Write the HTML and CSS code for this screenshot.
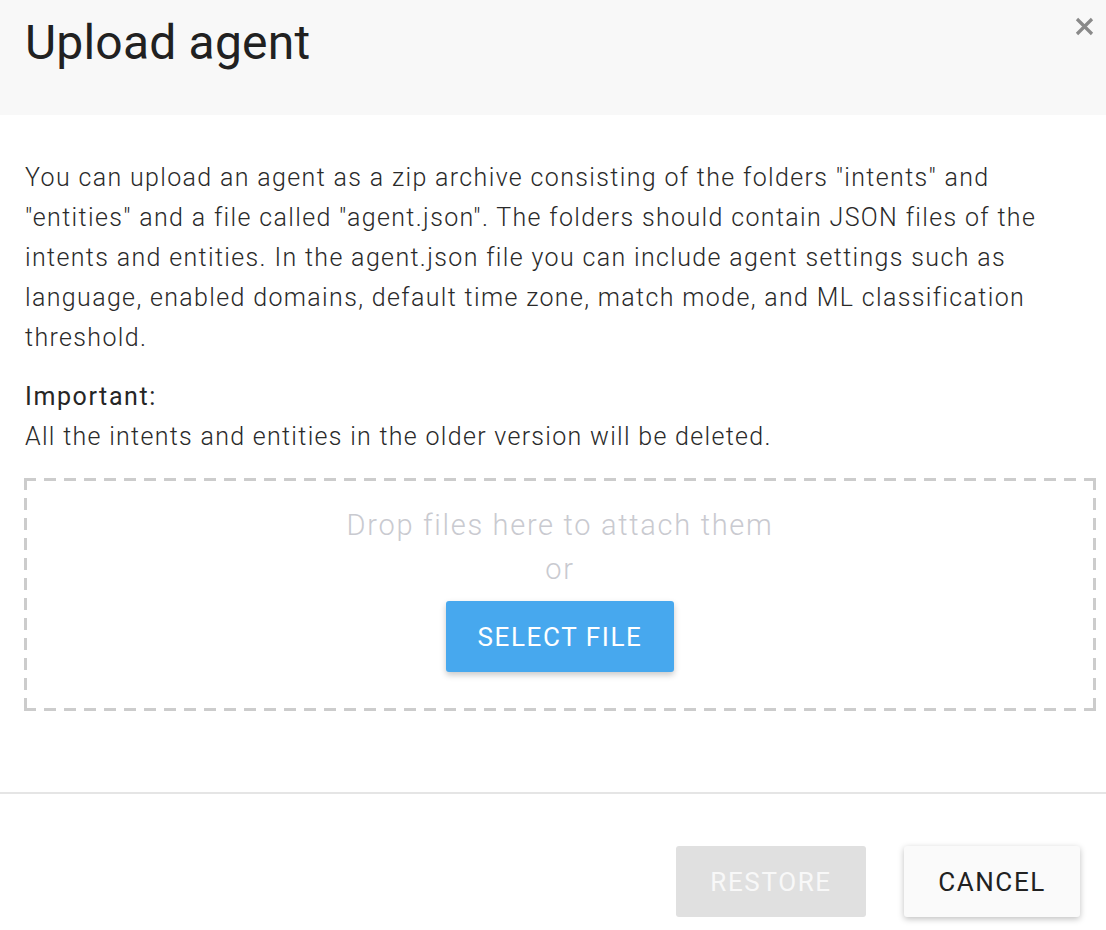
FILE: index.html
```html
<!DOCTYPE html>
<html lang="en">
<head>
<meta charset="utf-8">
<title>Upload agent</title>
<link rel="stylesheet" href="styles.css">
</head>
<body>
<div class="dialog">
  <header class="dialog-header">
    <h1 class="dialog-title">Upload agent</h1>
    <button class="close-btn" aria-label="Close">
      <svg width="19" height="19" viewBox="0 0 19 19"><path d="M2 2 L17 17 M17 2 L2 17" stroke="#8a8a8a" stroke-width="3.2" fill="none"/></svg>
    </button>
  </header>
  <section class="dialog-body">
    <p class="desc">You can upload an agent as a zip archive consisting of the folders "intents" and "entities" and a file called "agent.json". The folders should contain JSON files of the intents and entities. In the agent.json file you can include agent settings such as language, enabled domains, default time zone, match mode, and ML classification threshold.</p>
    <p class="important"><span class="important-label">Important:</span><br>All the intents and entities in the older version will be deleted.</p>
    <div class="dropzone">
      <div class="drop-text">Drop files here to attach them</div>
      <div class="drop-or">or</div>
      <button class="btn btn-primary">SELECT FILE</button>
    </div>
  </section>
  <footer class="dialog-footer">
    <button class="btn btn-disabled">RESTORE</button>
    <button class="btn btn-raised">CANCEL</button>
  </footer>
</div>
</body>
</html>
```

FILE: styles.css
```css
html, body {
  margin: 0;
  padding: 0;
  background: #ffffff;
}
body {
  font-family: Roboto, "Liberation Sans", Arial, sans-serif;
  color: #333333;
}
.dialog {
  width: 1106px;
  min-height: 930px;
  background: #ffffff;
}
.dialog-header {
  height: 115px;
  background: #f8f8f8;
  display: flex;
  justify-content: space-between;
  align-items: flex-start;
  padding: 0 12px 0 25px;
  box-sizing: border-box;
}
.dialog-title {
  margin: 15px 0 0 0;
  font-size: 48px;
  font-weight: 400;
  line-height: 56px;
  letter-spacing: 0.2px;
  color: #212121;
}
.close-btn {
  margin-top: 17px;
  padding: 0;
  border: 0;
  background: transparent;
  width: 19px;
  height: 19px;
  cursor: pointer;
}
.close-btn svg { display: block; }
.dialog-body {
  padding: 43px 10px 0 24px;
}
.desc {
  margin: 0;
  padding: 0 50px 0 1px;
  font-size: 25px;
  line-height: 40px;
  font-weight: 300;
  letter-spacing: 1.35px;
  color: #2a2a2a;
}
.important {
  margin: 19px 0 0 0;
  padding-left: 1px;
  font-size: 25px;
  line-height: 40px;
  font-weight: 300;
  letter-spacing: 1.3px;
  color: #2a2a2a;
}
.important-label {
  font-weight: 400;
  letter-spacing: 1.6px;
  color: #262626;
}
.dropzone {
  margin-top: 21px;
  height: 233px;
  box-sizing: border-box;
  padding-top: 25px;
  display: flex;
  flex-direction: column;
  align-items: center;
  background:
    repeating-linear-gradient(to right, #cccccc 0 12px, transparent 12px 20px) top left / 100% 3px no-repeat,
    repeating-linear-gradient(to right, #cccccc 0 12px, transparent 12px 20px) bottom left / 100% 3px no-repeat,
    repeating-linear-gradient(to bottom, #cccccc 0 12px, transparent 12px 20px) top left / 3px 100% no-repeat,
    repeating-linear-gradient(to bottom, #cccccc 0 12px, transparent 12px 20px) top right / 3px 100% no-repeat;
}
.drop-text,
.drop-or {
  font-size: 29px;
  line-height: 44px;
  font-weight: 300;
  letter-spacing: 1.7px;
  color: #c9cad0;
}
.btn {
  font-family: Roboto, "Liberation Sans", Arial, sans-serif;
  font-size: 26px;
  font-weight: 400;
  letter-spacing: 1.6px;
  height: 71px;
  border: 0;
  border-radius: 3px;
  padding: 0;
  box-sizing: border-box;
  cursor: pointer;
}
.btn-primary {
  margin-top: 10px;
  width: 228px;
  background: #47a8ee;
  color: #ffffff;
  box-shadow: 0 3px 6px rgba(0, 0, 0, 0.22);
}
.dialog-footer {
  margin-top: 81px;
  border-top: 2px solid #e5e5e5;
  display: flex;
  justify-content: flex-end;
  gap: 38px;
  padding: 52px 26px 0 0;
}
.btn-disabled {
  width: 190px;
  background: #e0e0e0;
  color: #f8f8f8;
}
.btn-raised {
  width: 176px;
  background: #fafafa;
  color: #212121;
  box-shadow: 0 2px 6px rgba(0, 0, 0, 0.25);
}
```
